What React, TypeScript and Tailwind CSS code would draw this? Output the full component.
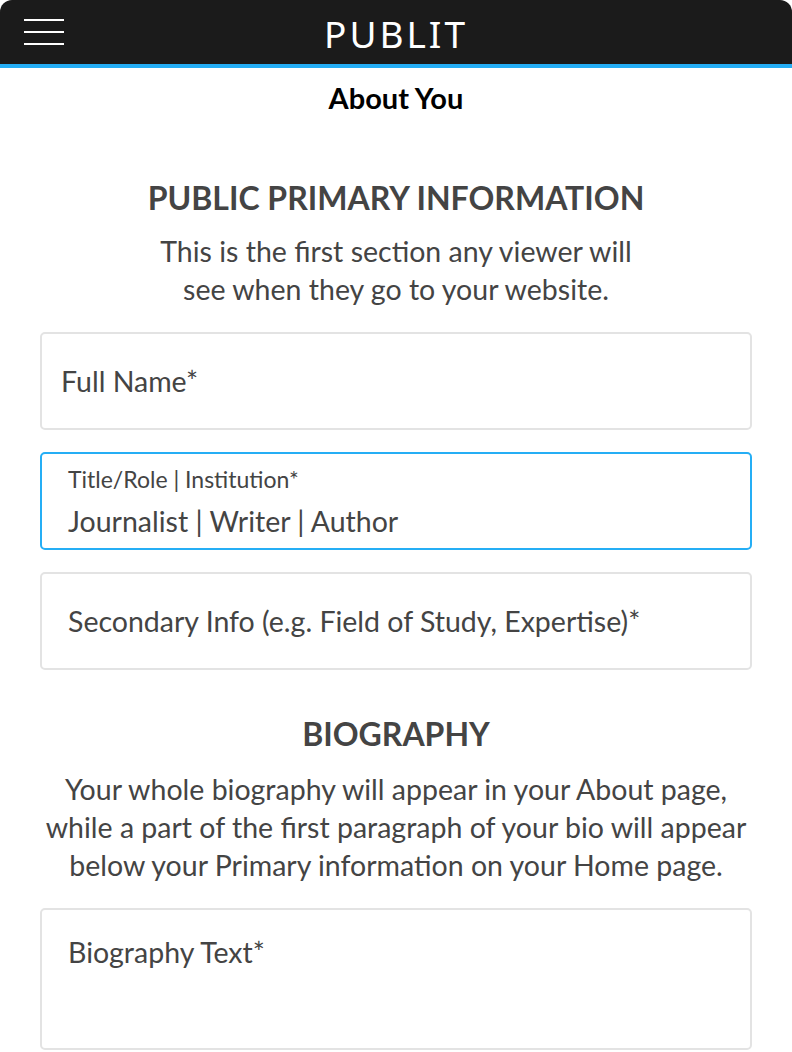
import React from 'react';

const fieldBase = 'w-full h-[98px] rounded-[5px] border-2 bg-white flex flex-col';

export default function App() {
  return (
    <div className="w-[792px] min-h-[1052px] bg-white text-[#444] font-['Lato',sans-serif]">
      {/* Шапка */}
      <header className="h-[64px] bg-[#1b1b1b] rounded-t-[12px] relative flex items-center justify-center">
        <button className="absolute left-[24px] top-[19px] flex flex-col gap-[10px]" aria-label="Menu">
          <span className="block w-[40px] h-[2px] bg-white" />
          <span className="block w-[40px] h-[2px] bg-white" />
          <span className="block w-[40px] h-[2px] bg-white" />
        </button>
        <span className="text-white text-[37px] tracking-[3px] leading-none font-['Noto_Sans',sans-serif] font-normal pt-[2px]">
          PUBLIT
        </span>
      </header>
      <div className="h-[4px] bg-[#25aef5]" />

      <h1 className="text-center text-black font-bold text-[29px] leading-[32px] mt-[14px]">About You</h1>

      <section className="px-[40px] pt-[66px]">
        <h2 className="text-center font-bold text-[32px] leading-[36px]">PUBLIC PRIMARY INFORMATION</h2>
        <p className="text-center text-[28.5px] leading-[38px] mt-[16px]">
          This is the first section any viewer will
          <br />
          see when they go to your website.
        </p>

        <div className="flex flex-col gap-[22px] mt-[24px]">
          <div className={`${fieldBase} border-[#e3e3e3] pl-[19px] justify-center`}>
            <span className="text-[28.5px] leading-[38px]">Full Name*</span>
          </div>
          <div className={`${fieldBase} border-[#25aef5] pl-[26px] pt-[12px]`}>
            <span className="text-[23px] leading-[26px]">Title/Role | Institution*</span>
            <span className="text-[28.5px] leading-[34px] mt-[12px]">Journalist | Writer | Author</span>
          </div>
          <div className={`${fieldBase} border-[#e3e3e3] pl-[26px] justify-center`}>
            <span className="text-[28.5px] leading-[38px]">Secondary Info (e.g. Field of Study, Expertise)*</span>
          </div>
        </div>

        <h2 className="text-center font-bold text-[32px] leading-[36px] mt-[46px]">BIOGRAPHY</h2>
        <p className="text-center text-[28.5px] leading-[38px] mt-[18px] -mx-[10px] whitespace-nowrap">
          Your whole biography will appear in your About page,
          <br />
          while a part of the first paragraph of your bio will appear
          <br />
          below your Primary information on your Home page.
        </p>

        <div className="mt-[24px] w-full h-[142px] rounded-[5px] border-2 border-[#e3e3e3] pl-[26px] pt-[23px]">
          <span className="text-[28.5px] leading-[38px]">Biography Text*</span>
        </div>
      </section>
    </div>
  );
}
